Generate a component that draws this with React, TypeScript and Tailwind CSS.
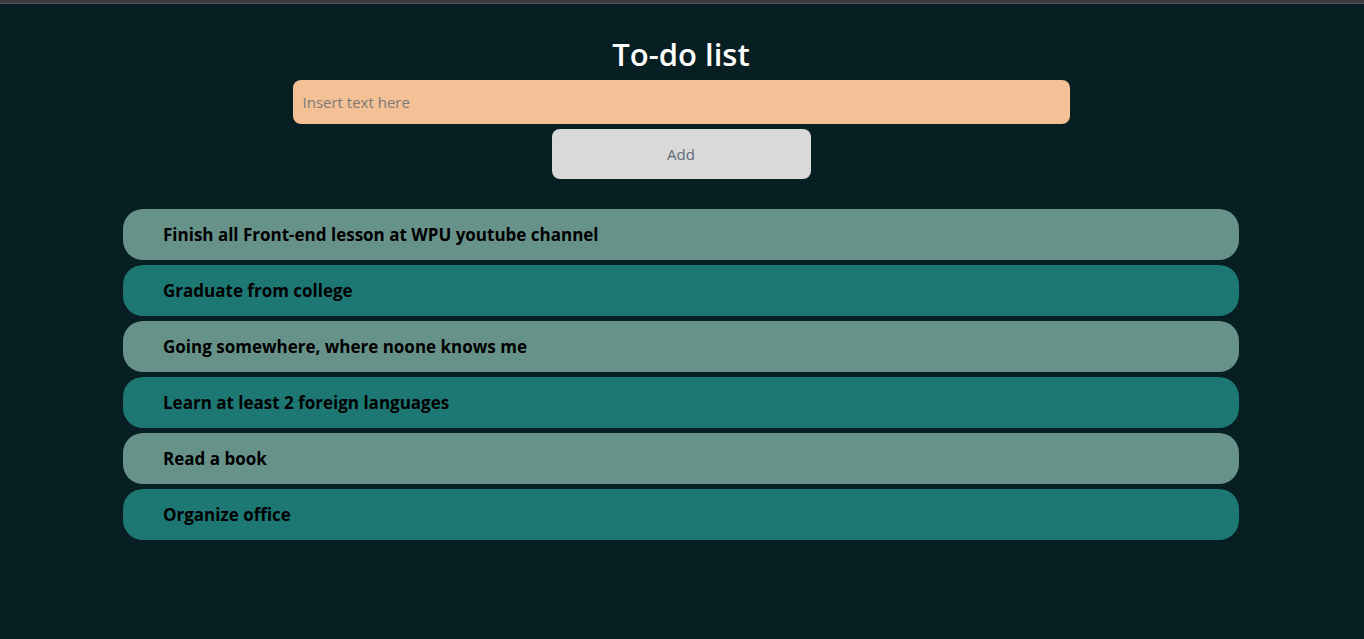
const todos = [
  "Finish all Front-end lesson at WPU youtube channel",
  "Graduate from college",
  "Going somewhere, where noone knows me",
  "Learn at least 2 foreign languages",
  "Read a book",
  "Organize office",
];

export default function App() {
  return (
    <div className="min-h-screen bg-[#071e22] font-['Open_Sans',sans-serif]">
      <div className="h-[3px] bg-[#3c3c40]" />
      <div className="h-px bg-[#5b5b5f]" />
      <div className="flex flex-col items-center pr-[2px]">
        <h1 className="mt-[31px] text-[31px] font-semibold leading-[38px] text-white">To-do list</h1>
        <input
          className="mt-[7px] h-[44px] w-[777px] rounded-lg bg-[#f4c095] px-[10px] text-[15px] text-[#3a3a3a] outline-none placeholder:text-[#7d7a75]"
          placeholder="Insert text here"
        />
        <button className="mt-[5px] h-[50px] w-[259px] rounded-lg bg-[#d9d9d9] text-[15px] text-[#5f6b73]">
          Add
        </button>
        <ul className="mt-[30px] flex w-[1116px] flex-col gap-[5px]">
          {todos.map((t, i) => (
            <li
              key={t}
              className={
                "flex h-[51px] items-center rounded-[20px] pl-[40px] text-[17px] font-bold text-black " +
                (i % 2 === 0 ? "bg-[#679289]" : "bg-[#1d7874]")
              }
            >
              {t}
            </li>
          ))}
        </ul>
      </div>
    </div>
  );
}
